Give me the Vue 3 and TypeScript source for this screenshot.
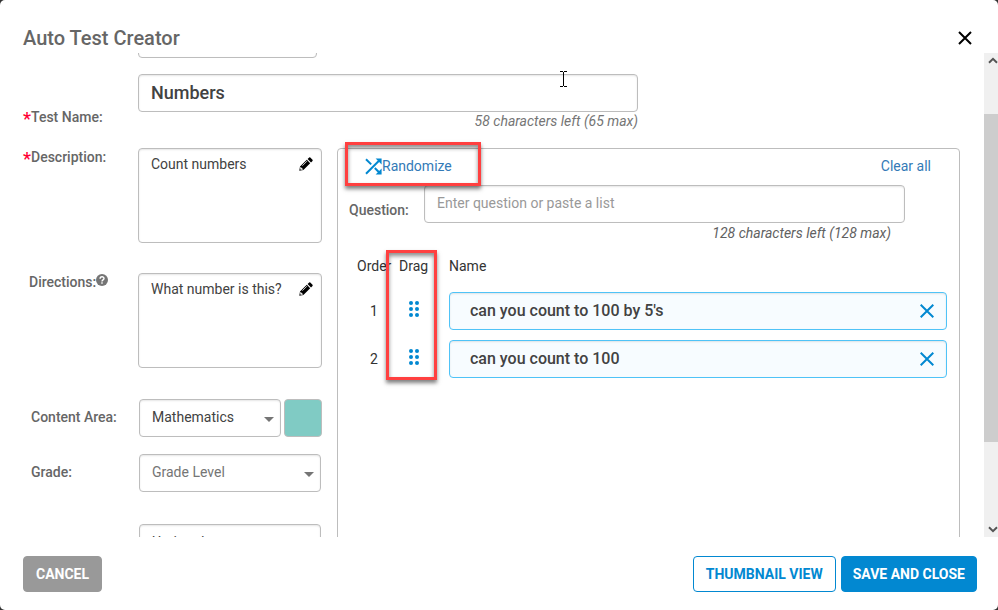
<script setup lang="ts">
import { ref } from 'vue'

interface Question {
  id: number
  text: string
}

const testName = ref('Numbers')
const description = ref('Count numbers')
const directions = ref('What number is this?')
const contentArea = ref('Mathematics')
const grade = ref('')
const questionDraft = ref('')
const questions = ref<Question[]>([
  { id: 1, text: "can you count to 100 by 5's" },
  { id: 2, text: 'can you count to 100' },
])

function removeQuestion(id: number): void {
  questions.value = questions.value.filter((q) => q.id !== id)
}

function clearAll(): void {
  questions.value = []
}

function randomize(): void {
  questions.value = [...questions.value].sort(() => Math.random() - 0.5)
}
</script>

<template>
  <div class="dialog" role="dialog" aria-labelledby="dialog-title">
    <header class="head">
      <h1 id="dialog-title">Auto Test Creator</h1>
      <button class="icon-btn" type="button" aria-label="Close">
        <svg width="14" height="14" viewBox="0 0 14 14"><path d="M1 1 13 13M13 1 1 13" stroke="#000" stroke-width="2" fill="none" /></svg>
      </button>
    </header>

    <div class="body">
      <main class="content">
        <div class="form">
          <select class="box type" aria-label="Test type"></select>

          <div class="name-row">
            <label class="label" for="test-name"><span class="req">*</span>Test Name:</label>
            <div class="name-field">
              <input id="test-name" v-model="testName" class="box name-input" type="text" />
              <p class="hint">58 characters left (65 max)</p>
            </div>
          </div>

          <div class="columns">
            <div class="fields">
              <div class="field">
                <label class="label" for="description"><span class="req">*</span>Description:</label>
                <div class="box area">
                  <textarea id="description" v-model="description"></textarea>
                  <button class="icon-btn" type="button" aria-label="Edit description">
                    <svg width="14" height="14" viewBox="0 0 14 14"><path d="M.3 13.7 1 9.6 7.8 2.8 11.2 6.2 4.4 13ZM8.6 2 10.2.4Q10.7 0 11.3.5L13.5 2.7Q14 3.3 13.5 3.9L12 5.4Z" /><path d="M1.7 10.4v1.9h1.9zM3.4 8.7 7.9 4.2" stroke="#fff" stroke-width=".8" fill="#fff" /></svg>
                  </button>
                </div>
              </div>
              <div class="field">
                <label class="label indent" for="directions">Directions:<svg class="help" width="12" height="12" viewBox="0 0 12 12"><circle cx="6" cy="6" r="6" fill="#757575" /><path d="M4.1 4.7C4.1 2.2 8 2.2 8 4.5 8 5.9 6 5.8 6 7.4M6 8.3V9.7" stroke="#fff" stroke-width="1.4" fill="none" /></svg></label>
                <div class="box area">
                  <textarea id="directions" v-model="directions"></textarea>
                  <button class="icon-btn" type="button" aria-label="Edit directions">
                    <svg width="14" height="14" viewBox="0 0 14 14"><path d="M.3 13.7 1 9.6 7.8 2.8 11.2 6.2 4.4 13ZM8.6 2 10.2.4Q10.7 0 11.3.5L13.5 2.7Q14 3.3 13.5 3.9L12 5.4Z" /><path d="M1.7 10.4v1.9h1.9zM3.4 8.7 7.9 4.2" stroke="#fff" stroke-width=".8" fill="#fff" /></svg>
                  </button>
                </div>
              </div>
              <div class="field short">
                <label class="label indent" for="content-area">Content Area:</label>
                <div class="picker">
                  <div class="select">
                    <select id="content-area" v-model="contentArea" class="box">
                      <option>Mathematics</option>
                    </select>
                    <svg class="caret" width="10" height="5" viewBox="0 0 10 5"><path d="M0 0H10L5 5Z" /></svg>
                  </div>
                  <button class="swatch" type="button" aria-label="Content area color"></button>
                </div>
              </div>
              <div class="field short">
                <label class="label indent" for="grade">Grade:</label>
                <div class="picker">
                  <div class="select">
                    <select id="grade" v-model="grade" class="box muted">
                      <option value="">Grade Level</option>
                    </select>
                    <svg class="caret" width="10" height="5" viewBox="0 0 10 5"><path d="M0 0H10L5 5Z" /></svg>
                  </div>
                </div>
              </div>
              <div class="field short last">
                <span></span>
                <div class="picker">
                  <div class="select">
                    <select class="box" aria-label="Timing">
                      <option>Untimed</option>
                    </select>
                  </div>
                </div>
              </div>
            </div>

            <section class="panel">
              <div class="tools">
                <button class="link" type="button" @click="randomize">
                  <svg width="17" height="17" viewBox="0 0 17 17"><path d="M1 1.2 6.2 6.4M9.8 10 14 14.2M1 15.8 14 2.8" stroke="#0288d1" stroke-width="2" fill="none" /><path d="M10.6.4H16.6V6.4ZM16.6 10.6V16.6H10.6Z" fill="#0288d1" /></svg>Randomize
                  <span class="callout wide"></span>
                </button>
                <button class="link" type="button" @click="clearAll">Clear all</button>
              </div>
              <div class="question">
                <label class="label" for="question">Question:</label>
                <input id="question" v-model="questionDraft" class="box" type="text" placeholder="Enter question or paste a list" />
              </div>
              <p class="hint dark">128 characters left (128 max)</p>

              <table>
                <thead>
                  <tr>
                    <th class="order">Order</th>
                    <th class="drag">Drag<span class="callout tall"></span></th>
                    <th>Name</th>
                  </tr>
                </thead>
                <tbody>
                  <tr v-for="(q, i) in questions" :key="q.id">
                    <td class="order">{{ i + 1 }}</td>
                    <td class="drag">
                      <button class="icon-btn grip" type="button" aria-label="Drag to reorder">
                        <svg width="10" height="16" viewBox="0 0 10 16" fill="#0288d1"><circle cx="2" cy="2" r="2" /><circle cx="8" cy="2" r="2" /><circle cx="2" cy="8" r="2" /><circle cx="8" cy="8" r="2" /><circle cx="2" cy="14" r="2" /><circle cx="8" cy="14" r="2" /></svg>
                      </button>
                    </td>
                    <td>
                      <div class="item">
                        <input v-model="q.text" type="text" :aria-label="`Question ${i + 1}`" />
                        <button class="icon-btn" type="button" aria-label="Remove question" @click="removeQuestion(q.id)">
                          <svg width="14" height="14" viewBox="0 0 14 14"><path d="M.7.7 13.3 13.3M13.3.7.7 13.3" stroke="#0288d1" stroke-width="2" fill="none" /></svg>
                        </button>
                      </div>
                    </td>
                  </tr>
                </tbody>
              </table>
            </section>
          </div>
        </div>
      </main>

      <div class="scrollbar">
        <svg width="10" height="7" viewBox="0 0 10 7"><path d="M1 5.8 5 1.8 9 5.8" stroke="#555" stroke-width="2" fill="none" /></svg>
        <div class="track"><div class="thumb"></div></div>
        <svg width="10" height="7" viewBox="0 0 10 7"><path d="M1 1.2 5 5.2 9 1.2" stroke="#555" stroke-width="2" fill="none" /></svg>
      </div>
    </div>

    <footer class="foot">
      <button class="btn gray" type="button">CANCEL</button>
      <button class="btn outline" type="button">THUMBNAIL VIEW</button>
      <button class="btn solid" type="button">SAVE AND CLOSE</button>
    </footer>

    <svg class="pointer" width="7" height="16" viewBox="0 0 7 16"><path d="M0 .5H3M4 .5H7M3.5 1V15M0 15.5H3M4 15.5H7" stroke="#000" fill="none" /></svg>
  </div>
</template>

<style>
body {
  background: #333;
}
</style>

<style scoped>
* {
  box-sizing: border-box;
}
.dialog {
  position: relative;
  display: flex;
  flex-direction: column;
  height: 100vh;
  overflow: hidden;
  border-radius: 5px;
  background: #fff;
  color: #424242;
  font: 14px/20px Roboto, sans-serif;
}
button, input, select, textarea {
  margin: 0;
  font: inherit;
  color: inherit;
}
.head {
  display: flex;
  align-items: center;
  justify-content: space-between;
  flex: none;
  height: 53px;
  padding: 23px 26px 0 23px;
}
h1 {
  margin: 0;
  color: #666;
  font-size: 20px;
  line-height: 30px;
  font-weight: 500;
}
.icon-btn {
  display: flex;
  padding: 0;
  border: 0;
  background: none;
  cursor: pointer;
}
.body {
  display: flex;
  flex: 1;
  min-height: 0;
}
.content {
  flex: 1;
  min-width: 0;
  overflow: hidden;
  padding: 0 24px 0 23px;
}
/* The form is scrolled a little way past its first control. */
.form {
  margin-top: -33px;
}
.box {
  width: 100%;
  height: 38px;
  padding: 0 12px 2px;
  border: 1px solid #bdbdbd;
  border-radius: 4px;
  background: #fff;
  box-shadow: inset 0 1px 2px rgba(0, 0, 0, 0.1);
  appearance: none;
  outline: none;
}
.type {
  display: block;
  width: 179px;
  margin: 0 0 16px 115px;
}
.label {
  color: #666;
  font-weight: 500;
}
.req {
  display: inline-block;
  width: 8px;
  color: #f03;
  font-size: 18px;
  line-height: 12px;
  vertical-align: -3px;
}
.name-row {
  display: flex;
  align-items: flex-end;
  height: 57px;
}
.name-row .label {
  flex: none;
  width: 115px;
  padding-bottom: 4px;
}
.name-field {
  flex: 0 1 500px;
}
.name-input {
  display: block;
  font-size: 18px;
  font-weight: 500;
}
.hint {
  margin: 0;
  color: #757575;
  font-style: italic;
  line-height: 19px;
  text-align: right;
}
.columns {
  display: flex;
  gap: 15px;
  margin-top: 17px;
}
.fields {
  flex: 0 0 299px;
  min-width: 0;
}
.field {
  display: grid;
  grid-template-columns: 115px minmax(0, 1fr);
  margin-bottom: 30px;
}
.field .label {
  line-height: 18px;
}
.indent {
  padding-left: 6px;
}
.short .label {
  padding: 9px 0 0 8px;
}
.help {
  vertical-align: 1px;
}
.area {
  display: flex;
  height: 95px;
  padding: 5px 8px 0 12px;
}
.area textarea {
  flex: 1;
  min-width: 0;
  padding: 0;
  border: 0;
  outline: none;
  resize: none;
  overflow: hidden;
  background: none;
}
.area .icon-btn {
  align-self: flex-start;
  padding-top: 3px;
}
.short {
  position: relative;
  margin-bottom: 17px;
}
.field + .short {
  margin-top: 31px;
}
.short + .short {
  margin-top: 0;
}
.short + .last {
  margin-top: 32px;
}
.picker {
  display: flex;
  gap: 3px;
  padding: 0 0 0 1px;
}
.short:not(:nth-child(3)) .picker {
  padding-right: 1px;
}
.select {
  position: relative;
  flex: 1;
  min-width: 0;
}
.muted {
  color: #757575;
}
.caret {
  position: absolute;
  right: 7px;
  top: 18px;
  fill: #757575;
  pointer-events: none;
}
.swatch {
  flex: none;
  width: 38px;
  height: 38px;
  padding: 0;
  border: 1px solid #bdbdbd;
  border-radius: 4px;
  background: #80cbc4;
}
.panel {
  flex: 1;
  min-width: 0;
  height: 480px;
  padding: 7px 12px 0 11px;
  border: 1px solid #bdbdbd;
  border-radius: 4px;
}
.tools {
  display: flex;
  justify-content: space-between;
  padding: 0 16px;
}
.link {
  position: relative;
  display: flex;
  align-items: center;
  padding: 0;
  border: 0;
  background: none;
  color: #337ab7;
  line-height: 20px;
  cursor: pointer;
}
.question {
  display: flex;
  align-items: center;
  margin-top: 9px;
  padding-right: 42px;
}
.question .label {
  flex: 0 0 75px;
  padding-top: 12px;
}
.question .box::placeholder {
  color: #999;
  opacity: 1;
}
.hint.dark {
  padding: 1px 56px 0 0;
  color: #616161;
}
table {
  width: 100%;
  margin-top: 13px;
  border-spacing: 0;
  table-layout: fixed;
  color: #333;
}
th {
  height: 20px;
  padding: 0;
  font-weight: 400;
  text-align: left;
}
td {
  padding: 10px 0 0;
}
th.order {
  width: 42px;
  padding-left: 8px;
}
td.order {
  padding-left: 21px;
}
.drag {
  position: relative;
  width: 58px;
}
th.drag {
  padding-left: 8px;
}
td.drag {
  padding: 6px 0 0 18px;
}
.grip {
  cursor: grab;
}
thead::after {
  content: '';
  display: block;
  height: 6px;
}
.item {
  display: flex;
  align-items: center;
  height: 38px;
  padding: 0 12px 0 20px;
  border: 1px solid #4fc3f7;
  border-radius: 4px;
  background: #f7fcff;
  box-shadow: inset 0 1px 2px rgba(0, 0, 0, 0.1);
}
.item input {
  flex: 1;
  min-width: 0;
  padding: 0;
  border: 0;
  outline: none;
  background: none;
  color: #424242;
  font-size: 16px;
  font-weight: 500;
}
.callout {
  position: absolute;
  z-index: 2;
  border: 3px solid #ff4040;
  box-shadow: 0 3px 4px rgba(0, 0, 0, 0.5), inset 0 3px 4px rgba(0, 0, 0, 0.45);
  pointer-events: none;
}
.wide {
  left: -20px;
  top: -14px;
  width: 136px;
  height: 44px;
}
.tall {
  left: -5px;
  top: -6px;
  width: 51px;
  height: 130px;
}
.scrollbar {
  display: flex;
  flex-direction: column;
  align-items: center;
  flex: none;
  width: 14px;
  padding: 4px 0;
  background: #f0f0f0;
}
.scrollbar svg {
  flex: none;
  align-self: flex-end;
}
.track {
  flex: 1;
  width: 100%;
  padding: 50px 0 84px;
}
.thumb {
  height: 100%;
  background: #cdcdcd;
}
.foot {
  display: flex;
  flex: none;
  gap: 5px;
  padding: 19px 21px 18px 23px;
}
.btn {
  height: 36px;
  padding: 0 12px;
  border: 1px solid #0288d1;
  border-radius: 4px;
  font-weight: 700;
  cursor: pointer;
}
.gray {
  margin-right: auto;
  border-color: #999;
  background: #999;
  color: #fff;
}
.outline {
  background: #fff;
  color: #0288d1;
}
.solid {
  padding: 0 11px;
  background: #0288d1;
  color: #fff;
}
.pointer {
  position: absolute;
  left: 560px;
  top: 71px;
}
</style>
